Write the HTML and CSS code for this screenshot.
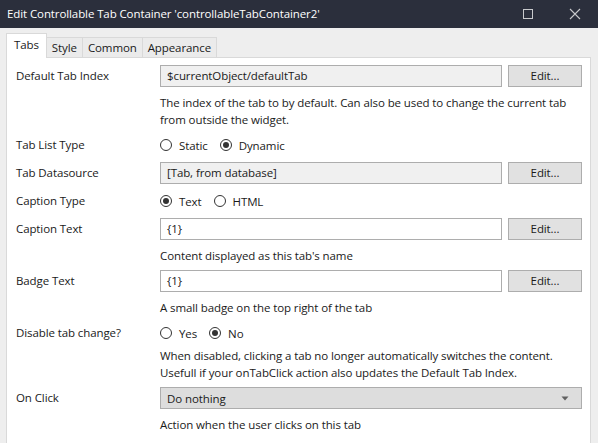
FILE: index.html
```html
<!DOCTYPE html>
<html>
<head>
<meta charset="utf-8">
<link rel="stylesheet" href="styles.css">
</head>
<body>
<div class="window">
  <div class="titlebar">
    <span class="title">Edit Controllable Tab Container 'controllableTabContainer2'</span>
    <div class="win-controls">
      <svg class="win-btn" width="12" height="12" viewBox="0 0 12 12"><rect x="1.5" y="1.5" width="9" height="9" fill="none" stroke="#c8c9cc" stroke-width="1"/></svg>
      <svg class="win-btn" width="12" height="12" viewBox="0 0 12 12"><path d="M1 1 L11 11 M11 1 L1 11" stroke="#c8c9cc" stroke-width="1.1" fill="none"/></svg>
    </div>
  </div>
  <div class="body">
    <div class="tabs">
      <div class="tab active">Tabs</div>
      <div class="tab">Style</div>
      <div class="tab">Common</div>
      <div class="tab">Appearance</div>
    </div>
    <div class="panel">
      <div class="field">
        <div class="label">Default Tab Index</div>
        <div class="control">
          <div class="input-row">
            <div class="input disabled">$currentObject/defaultTab</div>
            <div class="button">Edit...</div>
          </div>
          <div class="desc">The index of the tab to by default. Can also be used to change the current tab<br>from outside the widget.</div>
        </div>
      </div>
      <div class="field">
        <div class="label">Tab List Type</div>
        <div class="control radios">
          <span class="radio"><span class="dot"></span>Static</span>
          <span class="radio checked"><span class="dot"></span>Dynamic</span>
        </div>
      </div>
      <div class="field">
        <div class="label">Tab Datasource</div>
        <div class="control">
          <div class="input-row">
            <div class="input disabled">[Tab, from database]</div>
            <div class="button">Edit...</div>
          </div>
        </div>
      </div>
      <div class="field">
        <div class="label">Caption Type</div>
        <div class="control radios">
          <span class="radio checked"><span class="dot"></span>Text</span>
          <span class="radio"><span class="dot"></span>HTML</span>
        </div>
      </div>
      <div class="field">
        <div class="label">Caption Text</div>
        <div class="control">
          <div class="input-row">
            <div class="input">{1}</div>
            <div class="button">Edit...</div>
          </div>
          <div class="desc">Content displayed as this tab's name</div>
        </div>
      </div>
      <div class="field">
        <div class="label">Badge Text</div>
        <div class="control">
          <div class="input-row">
            <div class="input">{1}</div>
            <div class="button">Edit...</div>
          </div>
          <div class="desc">A small badge on the top right of the tab</div>
        </div>
      </div>
      <div class="field">
        <div class="label">Disable tab change?</div>
        <div class="control">
          <div class="radios">
            <span class="radio"><span class="dot"></span>Yes</span>
            <span class="radio checked"><span class="dot"></span>No</span>
          </div>
          <div class="desc desc-tight">When disabled, clicking a tab no longer automatically switches the content.<br>Usefull if your onTabClick action also updates the Default Tab Index.</div>
        </div>
      </div>
      <div class="field">
        <div class="label">On Click</div>
        <div class="control">
          <div class="select">
            <span>Do nothing</span>
            <svg width="8" height="5" viewBox="0 0 8 5"><path d="M0.5 0.5 L7.5 0.5 L4 4.5 Z" fill="#606060"/></svg>
          </div>
          <div class="desc">Action when the user clicks on this tab</div>
        </div>
      </div>
    </div>
  </div>
</div>
</body>
</html>
```
FILE: styles.css
```css
html, body {
  margin: 0;
  padding: 0;
}
body {
  width: 598px;
  height: 443px;
  overflow: hidden;
  background: #eeeeee;
  font-family: "Open Sans", "Noto Sans", sans-serif;
  font-size: 11.5px;
  letter-spacing: -0.1px;
  color: #1a1a1a;
}
.window {
  display: flex;
  flex-direction: column;
  height: 443px;
}
.titlebar {
  height: 28px;
  background: #2b2f3c;
  color: #ffffff;
  display: flex;
  align-items: center;
  justify-content: space-between;
  padding-left: 7px;
  flex-shrink: 0;
}
.title {
  line-height: 28px;
}
.win-controls {
  display: flex;
  gap: 35px;
  padding-right: 17px;
  align-items: center;
}
.win-btn {
  display: block;
}
.body {
  flex: 1;
  display: flex;
  flex-direction: column;
  padding: 6px 7px 0 6px;
}
.tabs {
  display: flex;
  align-items: flex-end;
  height: 23px;
  position: relative;
  z-index: 1;
}
.tab {
  height: 19px;
  line-height: 19px;
  padding: 0 5px;
  background: #ebebeb;
  border: 1px solid #d9d9d9;
  border-bottom: none;
  margin-right: -1px;
  white-space: nowrap;
}
.tab.active {
  height: 24px;
  line-height: 21px;
  background: #ffffff;
  padding: 0 7px;
  margin-bottom: -1px;
}
.panel {
  flex: 1;
  background: #ffffff;
  border: 1px solid #d9d9d9;
  border-bottom: none;
  padding: 7px 8px 0 9px;
}
.field {
  display: grid;
  grid-template-columns: 144px 1fr;
  margin-bottom: 6px;
}
.label {
  line-height: 22px;
  height: 22px;
  white-space: nowrap;
}
.input-row {
  display: flex;
  gap: 6px;
}
.input {
  flex: 1;
  height: 20px;
  line-height: 20px;
  border: 1px solid #adadad;
  background: #ffffff;
  padding: 0 6px;
}
.input.disabled {
  background: #f0f0f0;
}
.button {
  width: 72px;
  height: 20px;
  line-height: 20px;
  text-align: center;
  border: 1px solid #adadad;
  background: #e1e1e1;
}
.desc {
  line-height: 17px;
  margin-top: 7px;
  white-space: nowrap;
}
.desc.desc-tight {
  margin-top: 3px;
}
.radios {
  display: flex;
  align-items: center;
  height: 22px;
  gap: 12px;
}
.radio {
  display: flex;
  align-items: center;
  gap: 7px;
}
.dot {
  width: 10px;
  height: 10px;
  border: 1px solid #333333;
  border-radius: 50%;
  display: flex;
  align-items: center;
  justify-content: center;
}
.radio.checked .dot::after {
  content: "";
  width: 6px;
  height: 6px;
  border-radius: 50%;
  background: #333333;
}
.select {
  height: 20px;
  border: 1px solid #adadad;
  background: #dddddd;
  display: flex;
  align-items: center;
  justify-content: space-between;
  padding: 0 12px 0 6px;
}
```
